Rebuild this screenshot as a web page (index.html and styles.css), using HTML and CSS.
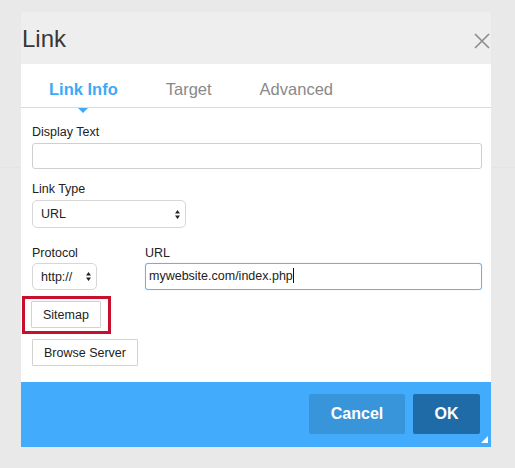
FILE: index.html
```html
<!DOCTYPE html>
<html lang="en">
<head>
    <meta charset="UTF-8">
    <title>Link</title>
    <link rel="stylesheet" href="styles.css">
</head>
<body>
    <div class="dialog">
        <div class="dialog-head">
            <span class="dialog-title">Link</span>
            <svg class="close-btn" width="16" height="16" viewBox="0 0 16 16">
                <path d="M1 1 L15 15 M15 1 L1 15" stroke="#8c8c8c" stroke-width="1.6" fill="none"/>
            </svg>
        </div>

        <div class="dialog-body">
            <div class="tabs">
                <span class="tab active">Link Info</span>
                <span class="tab">Target</span>
                <span class="tab">Advanced</span>
            </div>

            <div class="form">
                <label class="label">Display Text</label>
                <div class="text-input wide"></div>

                <label class="label label-type">Link Type</label>
                <div class="select select-type">
                    <span>URL</span>
                    <svg width="5" height="9" viewBox="0 0 5 9"><path d="M0 3.5 L2.5 0 L5 3.5 Z M0 5.5 L2.5 9 L5 5.5 Z" fill="#222"/></svg>
                </div>

                <div class="proto-row">
                    <div class="proto-col">
                        <label class="label">Protocol</label>
                        <div class="select select-proto">
                            <span>http://</span>
                            <svg width="5" height="9" viewBox="0 0 5 9"><path d="M0 3.5 L2.5 0 L5 3.5 Z M0 5.5 L2.5 9 L5 5.5 Z" fill="#222"/></svg>
                        </div>
                    </div>
                    <div class="url-col">
                        <label class="label">URL</label>
                        <div class="text-input focused">mywebsite.com/index.php<span class="caret"></span></div>
                    </div>
                </div>

                <div class="highlight">
                    <button class="btn">Sitemap</button>
                </div>
                <button class="btn browse">Browse Server</button>
            </div>

            <div class="dialog-foot">
                <button class="foot-btn cancel">Cancel</button>
                <button class="foot-btn ok">OK</button>
                <span class="grip"></span>
            </div>
        </div>
    </div>
</body>
</html>
```

FILE: styles.css
```css
body {
    margin: 0;
    height: 468px;
    overflow: hidden;
    background: linear-gradient(to bottom, transparent 167px, #dfe7df 167px, #dfe7df 168px, transparent 168px), #e9e9e9;
    font-family: 'Liberation Sans', Arial, sans-serif;
    color: #222;
}

.dialog {
    width: 470px;
    margin: 12px 0 0 21px;
}

.dialog-head {
    height: 52px;
    background: #eeeeee;
    display: flex;
    align-items: center;
    justify-content: space-between;
}

.dialog-title {
    font-size: 24px;
    color: #383838;
    margin-top: 1px;
    margin-left: 1px;
}

.close-btn {
    margin-right: 1px;
    margin-top: 6px;
}

.dialog-body {
    background: #fff;
}

.tabs {
    display: flex;
    gap: 48px;
    padding: 16px 0 9px 28px;
    border-bottom: 1px solid #dcdcdc;
    font-size: 16.5px;
    line-height: 18px;
}

.tab {
    color: #898989;
    position: relative;
}

.tab.active {
    color: #3ea9f5;
    font-weight: bold;
}

.tab.active::after {
    content: "";
    position: absolute;
    left: 50%;
    top: 28px;
    margin-left: -5px;
    border-left: 5px solid transparent;
    border-right: 5px solid transparent;
    border-top: 5px solid #3ea9f5;
}

.form {
    display: flex;
    flex-direction: column;
    align-items: flex-start;
    padding: 17px 9px 16px 11px;
    font-size: 12.5px;
}

.label {
    display: block;
    line-height: 15px;
    margin-bottom: 3px;
}

.label-type {
    margin-top: 13px;
}

.text-input {
    box-sizing: border-box;
    height: 26px;
    border: 1px solid #cfcfcf;
    border-radius: 3px;
    background: #fff;
    line-height: 24px;
    padding: 0 3px;
}

.text-input.wide {
    width: 450px;
}

.text-input.focused {
    height: 27px;
    line-height: 25px;
    border-color: #6cb2ea;
    box-shadow: 0 0 1px rgba(80, 160, 230, 0.5);
}

.caret {
    display: inline-block;
    width: 1px;
    height: 15px;
    background: #111;
    vertical-align: -3px;
}

.select {
    box-sizing: border-box;
    display: flex;
    align-items: center;
    justify-content: space-between;
    border: 1px solid #d6d6d6;
    border-radius: 5px;
    padding: 0 5px 0 8px;
    background: #fff;
}

.select-type {
    width: 154px;
    height: 28px;
}

.proto-row {
    display: flex;
    margin-top: 18px;
}

.proto-row .label {
    margin-bottom: 2px;
}

.proto-col {
    width: 113px;
}

.select-proto {
    width: 65px;
    height: 27px;
}

.url-col {
    width: 337px;
}

.highlight {
    margin: 6px 0 0 -10px;
    border: 3px solid #c8102e;
    padding: 2px 7px 3px 6px;
}

.btn {
    height: 27px;
    padding: 0 11px;
    border: 1px solid #d2d2d2;
    border-radius: 1px;
    background: #fff;
    font-family: inherit;
    font-size: 12.5px;
    color: #222;
}

.browse {
    margin-top: 5px;
}

.dialog-foot {
    position: relative;
    display: flex;
    justify-content: flex-end;
    gap: 8px;
    padding: 12px 11px 13px;
    background: #42abfc;
}

.foot-btn {
    height: 40px;
    padding: 0 21px;
    border: none;
    border-radius: 2px;
    font-family: inherit;
    font-size: 16px;
    font-weight: bold;
    color: #fff;
}

.cancel {
    width: 96px;
    background: #3995da;
}

.ok {
    width: 67px;
    background: #1e6ba7;
}

.grip {
    position: absolute;
    right: 3px;
    bottom: 4px;
    border-left: 7px solid transparent;
    border-bottom: 7px solid #fff;
}
```
